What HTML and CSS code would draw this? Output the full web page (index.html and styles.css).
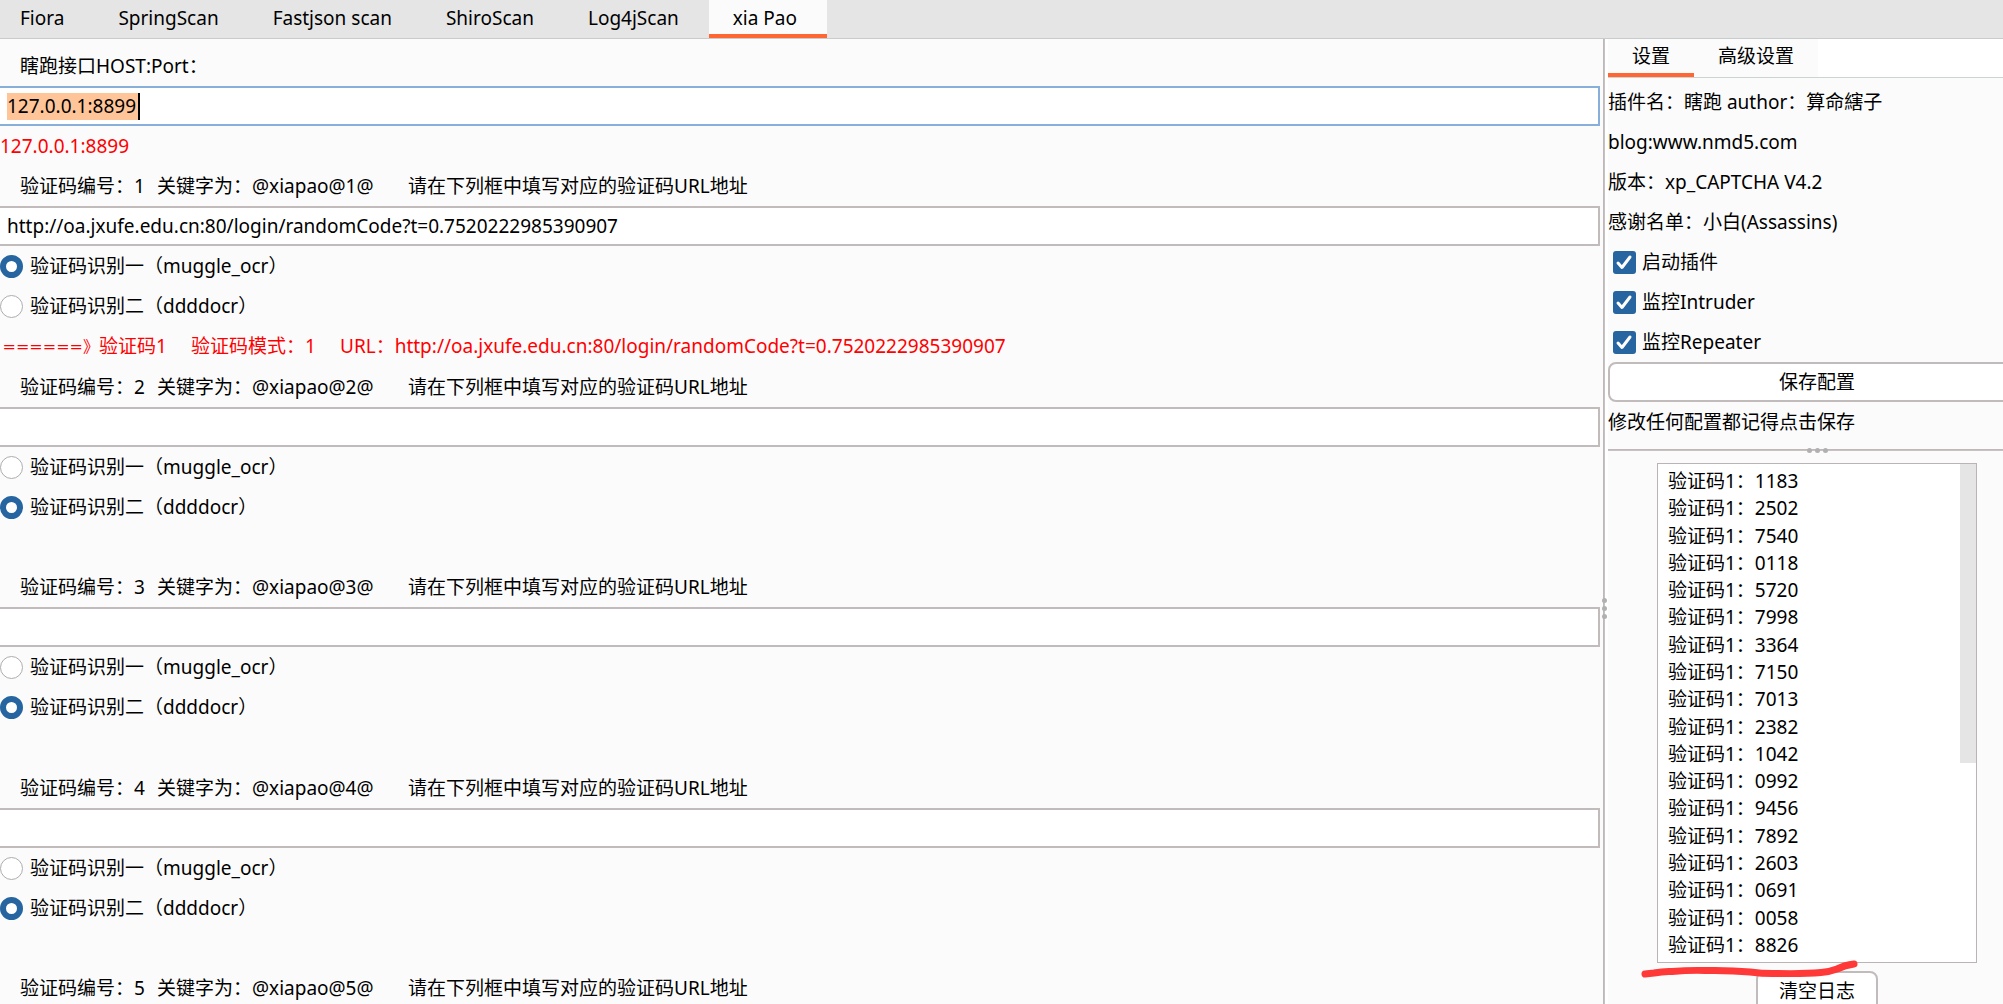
FILE: index.html
```html
<!DOCTYPE html>
<html lang="zh-CN">
<head>
<meta charset="utf-8">
<title>xia Pao</title>
<link rel="stylesheet" href="styles.css">
</head>
<body>
<nav class="tabs">
  <button class="tab" type="button">Fiora</button>
  <button class="tab" type="button">SpringScan</button>
  <button class="tab" type="button">Fastjson scan</button>
  <button class="tab" type="button">ShiroScan</button>
  <button class="tab" type="button">Log4jScan</button>
  <button class="tab tab-active" type="button">xia Pao</button>
</nav>
<div class="workspace">
  <main class="main">
    <label class="row caption" for="host">瞎跑接口HOST:Port：</label>
    <div class="field field-focus"><input class="selected" id="host" type="text" value="127.0.0.1:8899"></div>
    <p class="row status">127.0.0.1:8899</p>

    <label class="row caption" for="url1"><span class="number">验证码编号：1</span><span class="keyword">关键字为：@xiapao@1@</span><span>请在下列框中填写对应的验证码URL地址</span></label>
    <input class="field" id="url1" type="text" value="http://oa.jxufe.edu.cn:80/login/randomCode?t=0.7520222985390907">
    <label class="row option"><input class="radio" type="radio" name="mode1" checked>验证码识别一（muggle_ocr）</label>
    <label class="row option"><input class="radio" type="radio" name="mode1">验证码识别二（ddddocr）</label>
    <p class="row result"><span class="result-arrow">======》</span><span class="result-name">验证码1</span><span class="result-mode">验证码模式：1</span><span>URL：http://oa.jxufe.edu.cn:80/login/randomCode?t=0.7520222985390907</span></p>

    <label class="row caption" for="url2"><span class="number">验证码编号：2</span><span class="keyword">关键字为：@xiapao@2@</span><span>请在下列框中填写对应的验证码URL地址</span></label>
    <input class="field" id="url2" type="text">
    <label class="row option"><input class="radio" type="radio" name="mode2">验证码识别一（muggle_ocr）</label>
    <label class="row option"><input class="radio" type="radio" name="mode2" checked>验证码识别二（ddddocr）</label>
    <p class="row status"></p>

    <label class="row caption" for="url3"><span class="number">验证码编号：3</span><span class="keyword">关键字为：@xiapao@3@</span><span>请在下列框中填写对应的验证码URL地址</span></label>
    <input class="field" id="url3" type="text">
    <label class="row option"><input class="radio" type="radio" name="mode3">验证码识别一（muggle_ocr）</label>
    <label class="row option"><input class="radio" type="radio" name="mode3" checked>验证码识别二（ddddocr）</label>
    <p class="row result"></p>

    <label class="row caption" for="url4"><span class="number">验证码编号：4</span><span class="keyword">关键字为：@xiapao@4@</span><span>请在下列框中填写对应的验证码URL地址</span></label>
    <input class="field" id="url4" type="text">
    <label class="row option"><input class="radio" type="radio" name="mode4">验证码识别一（muggle_ocr）</label>
    <label class="row option"><input class="radio" type="radio" name="mode4" checked>验证码识别二（ddddocr）</label>
    <p class="row status"></p>

    <p class="row caption"><span class="number">验证码编号：5</span><span class="keyword">关键字为：@xiapao@5@</span><span>请在下列框中填写对应的验证码URL地址</span></p>
  </main>

  <div class="splitter"><i class="dot"></i><i class="dot"></i><i class="dot"></i></div>

  <aside class="side">
    <div class="side-content">
      <div class="side-tabs">
        <button class="side-tab side-tab-active" type="button">设置</button>
        <button class="side-tab" type="button">高级设置</button>
      </div>
      <p class="row">插件名：瞎跑 author：算命縖子</p>
      <p class="row">blog:www.nmd5.com</p>
      <p class="row">版本：xp_CAPTCHA V4.2</p>
      <p class="row">感谢名单：小白(Assassins)</p>
      <label class="row check-row"><input class="check" type="checkbox" checked>启动插件</label>
      <label class="row check-row"><input class="check" type="checkbox" checked>监控Intruder</label>
      <label class="row check-row"><input class="check" type="checkbox" checked>监控Repeater</label>
      <button class="save" type="button">保存配置</button>
      <p class="row">修改任何配置都记得点击保存</p>
      <div class="splitter-h"><i class="dot"></i><i class="dot"></i><i class="dot"></i></div>
      <section class="log">
        <ol class="log-lines">
          <li>验证码1：1183</li>
          <li>验证码1：2502</li>
          <li>验证码1：7540</li>
          <li>验证码1：0118</li>
          <li>验证码1：5720</li>
          <li>验证码1：7998</li>
          <li>验证码1：3364</li>
          <li>验证码1：7150</li>
          <li>验证码1：7013</li>
          <li>验证码1：2382</li>
          <li>验证码1：1042</li>
          <li>验证码1：0992</li>
          <li>验证码1：9456</li>
          <li>验证码1：7892</li>
          <li>验证码1：2603</li>
          <li>验证码1：0691</li>
          <li>验证码1：0058</li>
          <li>验证码1：8826</li>
        </ol>
        <div class="scrollbar"><div class="thumb"></div></div>
        <svg class="stroke" width="220" height="24" viewBox="0 0 220 24" fill="none" stroke="#ff3838" stroke-width="7" stroke-linecap="round" stroke-linejoin="round" aria-hidden="true">
          <path d="M5 15 L14 14 Q24 12 32 12.500 Q50 11 65 11.500 Q90 11 110 13 Q125 15 138 14.500 Q165 15 181 13.500 Q189 13 197 10 Q205 6 214 5"/>
        </svg>
      </section>
      <button class="clear" type="button">清空日志</button>
    </div>
  </aside>
</div>
</body>
</html>
```
FILE: styles.css
```css
* { box-sizing: border-box; }

body {
  margin: 0;
  height: 100vh;
  display: flex;
  flex-direction: column;
  overflow: hidden;
  background: #fbfbfb;
  color: #000;
  font: 19px/27px "Noto Sans", "Noto Sans CJK SC", sans-serif;
}

p, ol { margin: 0; padding: 0; }

button, input {
  margin: 0;
  font: inherit;
  color: inherit;
}

/* Top tab bar */
.tabs {
  flex: none;
  display: flex;
  height: 39px;
  margin-left: -4px;
  background: #e5e5e5;
  border-bottom: 1px solid #c8cccc;
}

.tab {
  padding: 2px 30px 0 24px;
  border: 0;
  border-bottom: 4px solid transparent;
  background: none;
}

.tab-active {
  background: #fbfbfb;
  border-bottom-color: #ff6633;
}

.workspace {
  flex: 1;
  min-height: 0;
  display: flex;
}

/* Captcha form */
.main {
  flex: 1;
  min-width: 0;
  display: flex;
  flex-direction: column;
  padding-top: 7px;
  overflow: hidden;
}

.row {
  flex: none;
  display: flex;
  align-items: center;
  height: 40px;
  white-space: pre;
}

.caption { padding-left: 20px; }

.number { width: 137px; }

.keyword { width: 251px; }

.status { color: #f00; }

.result {
  height: 41px;
  color: #f00;
}

.result-arrow {
  width: 99px;
  font-family: "DejaVu Sans", "Noto Sans CJK SC", sans-serif;
  font-size: 16px;
  text-align: right;
}

.result-name { width: 92px; }

.result-mode { width: 149px; }

.field {
  flex: none;
  display: flex;
  align-items: center;
  width: 100%;
  height: 40px;
  padding: 0 7px;
  border: 2px solid #c2bbbb;
  border-left: 0;
  background: #fff;
  outline: 0;
}

.field-focus { border-color: #87afda; }

.selected {
  width: 133px;
  height: 27px;
  padding: 0;
  border: 0;
  border-right: 2px solid #000;
  background: #ffc599;
  outline: 0;
}

.option {
  gap: 7px;
  padding-top: 1px;
}

.radio {
  appearance: none;
  width: 23px;
  height: 23px;
  border: 1px solid #adadad;
  border-radius: 50%;
  background: #fff;
}

.radio:checked { border: 6px solid #2665a0; }

/* Draggable dividers */
.splitter {
  flex: none;
  width: 8px;
  display: flex;
  flex-direction: column;
  align-items: center;
  justify-content: center;
  gap: 3px;
  padding-top: 174px;
  background: linear-gradient(90deg, transparent 3px, #bcb4b4 3px, #ccc6c6 5px, #fff 5px);
}

.dot {
  flex: none;
  width: 5px;
  height: 5px;
  border-radius: 50%;
  background: #b0b0b0;
}

.side {
  flex: none;
  width: 395px;
  overflow: hidden;
}

.side-content {
  width: 418px;
  display: flex;
  flex-direction: column;
}

.side-tabs {
  display: flex;
  height: 39px;
  margin-bottom: 4px;
  background: #fff;
  border-bottom: 1px solid #ccd4d2;
}

.side-tab {
  padding: 0 24px;
  border: 0;
  border-bottom: 4px solid transparent;
  background: #fbfbfb;
}

.side-tab-active { border-bottom-color: #ff6633; }

.check-row {
  gap: 6px;
  padding-left: 5px;
}

.check {
  appearance: none;
  width: 23px;
  height: 23px;
  border-radius: 3px;
  background: #2665a0;
}

.check:checked {
  background-image: url("data:image/svg+xml,%3Csvg xmlns='http://www.w3.org/2000/svg' viewBox='0 0 23 23'%3E%3Cpath d='M5 12l4 4.500L17 6' fill='none' stroke='white' stroke-width='3' stroke-linecap='round' stroke-linejoin='round'/%3E%3C/svg%3E");
}

.save, .clear {
  height: 40px;
  border: 2px solid #c2bbbb;
  border-radius: 8px;
  background: #fff;
}

.splitter-h {
  display: flex;
  align-items: center;
  justify-content: center;
  gap: 3px;
  height: 8px;
  margin: 4px 0 9px;
  background: linear-gradient(transparent 3px, #bcb4b4 3px, #ccc6c6 5px, transparent 5px);
}

/* Recognition log */
.log {
  position: relative;
  align-self: center;
  display: flex;
  width: 320px;
  height: 500px;
  border: 1px solid #bcb4b4;
  background: #fff;
}

.log-lines {
  flex: 1;
  display: flex;
  flex-direction: column;
  justify-content: space-between;
  padding: 4px 10px 3px;
  list-style: none;
}

.scrollbar { width: 16px; }

.thumb {
  height: 60%;
  background: #e5e5e5;
}

.clear {
  align-self: center;
  width: 122px;
  margin-top: 8px;
}

/* Hand-drawn marker line under the last result */
.stroke {
  position: absolute;
  left: -18px;
  top: 495px;
  z-index: 1;
}
```
